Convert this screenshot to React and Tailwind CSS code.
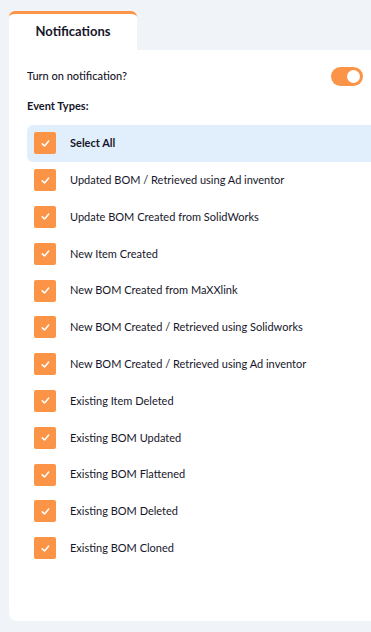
import { useState } from "react";

const events = [
  "Updated BOM / Retrieved using Ad inventor",
  "Update BOM Created from SolidWorks",
  "New Item Created",
  "New BOM Created from MaXXlink",
  "New BOM Created / Retrieved using Solidworks",
  "New BOM Created / Retrieved using Ad inventor",
  "Existing Item Deleted",
  "Existing BOM Updated",
  "Existing BOM Flattened",
  "Existing BOM Deleted",
  "Existing BOM Cloned",
];

const Check = () => (
  <span className="flex h-[22px] w-[22px] shrink-0 items-center justify-center rounded-[2px] bg-[#fb9447]">
    <svg width="11" height="11" viewBox="0 0 12 12" fill="none">
      <path d="M2.5 6.4 L5 8.7 L9.5 3.4" stroke="white" strokeWidth="1.7" strokeLinecap="round" strokeLinejoin="round" />
    </svg>
  </span>
);

export default function App() {
  const [on, setOn] = useState(true);

  return (
    <div className="min-h-[632px] bg-[#f0f4f9] pt-[11px] text-[#16162a]" style={{ fontFamily: "Lato, 'Noto Sans', sans-serif" }}>
      <div className="ml-[9px] flex h-[39px] w-[128px] items-center justify-center rounded-t-[6px] border-t-[3px] border-[#fb9447] bg-white text-[13px] font-bold">
        Notifications
      </div>
      <div className="ml-[9px] h-[571px] rounded-bl-[8px] bg-white pl-[18px] pt-[17px]">
        <div className="flex h-[19px] items-center justify-between pr-[8px]">
          <span className="text-[11px] font-medium">Turn on notification?</span>
          <button
            onClick={() => setOn(!on)}
            className={`flex h-[19px] w-[32px] items-center rounded-full px-[3px] ${on ? "justify-end bg-[#fb9447]" : "justify-start bg-gray-300"}`}
          >
            <span className="h-[13px] w-[13px] rounded-full bg-white" />
          </button>
        </div>
        <div className="mt-[13px] h-[14px] text-[11px] font-bold leading-[14px]">Event Types:</div>
        <div className="mt-[12px] flex flex-col">
          <div className="flex h-[36.8px] items-center gap-[14px] rounded-l-[6px] bg-[#e1effd] pl-[7px]">
            <Check />
            <span className="text-[11px] font-bold">Select All</span>
          </div>
          {events.map((e) => (
            <div key={e} className="flex h-[36.8px] items-center gap-[14px] pl-[7px]">
              <Check />
              <span className="text-[11px]">{e}</span>
            </div>
          ))}
        </div>
      </div>
    </div>
  );
}
